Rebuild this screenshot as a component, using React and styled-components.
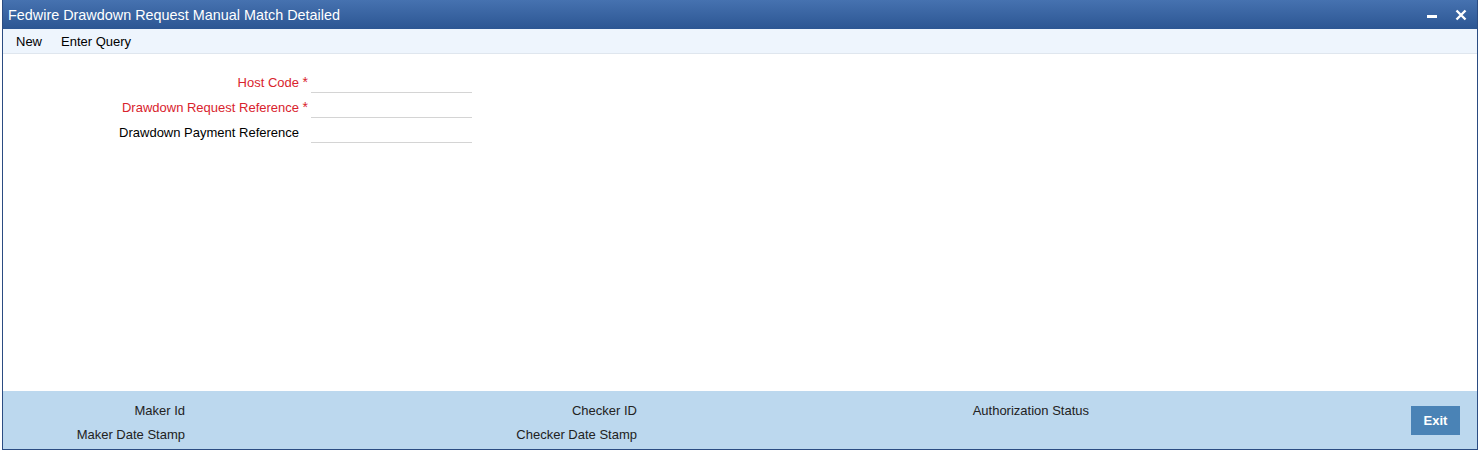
import React from "react";
import styled, { createGlobalStyle } from "styled-components";

const Global = createGlobalStyle`
  html, body { margin: 0; padding: 0; background: #fff; }
  body { font-family: "Liberation Sans", Arial, sans-serif; font-size: 13px; color: #000; }
`;

const Page = styled.div`
  padding: 0 2px 3px 2px;
  height: 453px;
  box-sizing: border-box;
`;

const Window = styled.div`
  height: 100%;
  box-sizing: border-box;
  border: 1px solid #2b4c82;
  border-top: none;
  display: flex;
  flex-direction: column;
  background: #fff;
`;

const TitleBar = styled.div`
  height: 29px;
  flex: none;
  display: flex;
  align-items: center;
  justify-content: space-between;
  padding: 0 10px 0 5px;
  background: linear-gradient(#4672b0, #2c5693);
  color: #fff;
`;

const Title = styled.div`
  font-size: 14.4px;
`;

const Controls = styled.div`
  display: flex;
  align-items: center;
  gap: 17px;
`;

const Toolbar = styled.div`
  height: 24px;
  flex: none;
  display: flex;
  align-items: center;
  gap: 19px;
  padding: 0 0 0 13px;
  background: #eef5fd;
  border-bottom: 1px solid #dfe6ee;
`;

const ToolItem = styled.span`
  font-size: 13px;
  color: #000;
`;

const Form = styled.div`
  flex: 1;
  padding-top: 16px;
  display: flex;
  flex-direction: column;
`;

const Row = styled.div`
  display: flex;
  align-items: flex-start;
  height: 25px;
`;

const Label = styled.div`
  width: 308px;
  box-sizing: border-box;
  padding-right: 3px;
  text-align: right;
  color: ${(p) => (p.$required ? "#d9232d" : "#000")};
  line-height: 25px;
  white-space: nowrap;
`;

const Star = styled.span`
  display: inline-block;
  width: 9px;
  text-align: right;
  font-size: 14px;
  color: #d9232d;
`;

const Input = styled.div`
  width: 161px;
  height: 22px;
  border-bottom: 1px solid #d4d4d4;
`;

const Footer = styled.div`
  height: 58px;
  flex: none;
  background: #bcd8ee;
  display: flex;
  align-items: flex-start;
  padding-top: 11px;
  box-sizing: border-box;
  position: relative;
`;

const FooterCol = styled.div`
  width: 452px;
  display: flex;
  flex-direction: column;
  gap: 6px;
`;

const FooterLabel = styled.div`
  width: 182px;
  text-align: right;
  line-height: 18px;
  color: #222;
`;

const ExitButton = styled.button`
  position: absolute;
  right: 17px;
  top: 15px;
  width: 49px;
  height: 29px;
  border: none;
  background: #4a83b6;
  color: #fff;
  font-family: "Liberation Sans", Arial, sans-serif;
  font-weight: bold;
  font-size: 13px;
  padding: 0;
`;

const Minimize = () => (
  <svg width="11" height="12" viewBox="0 0 11 12">
    <rect x="0" y="6" width="10" height="3" fill="#fff" />
  </svg>
);

const Close = () => (
  <svg width="12" height="12" viewBox="0 0 12 12">
    <path d="M1.5 1.5 L10.5 10.5 M10.5 1.5 L1.5 10.5" stroke="#fff" strokeWidth="2.4" />
  </svg>
);

export default function App() {
  return (
    <Page>
      <Global />
      <Window>
        <TitleBar>
          <Title>Fedwire Drawdown Request Manual Match Detailed</Title>
          <Controls>
            <Minimize />
            <Close />
          </Controls>
        </TitleBar>
        <Toolbar>
          <ToolItem>New</ToolItem>
          <ToolItem>Enter Query</ToolItem>
        </Toolbar>
        <Form>
          <Row>
            <Label $required>
              Host Code<Star>*</Star>
            </Label>
            <Input />
          </Row>
          <Row>
            <Label $required>
              Drawdown Request Reference<Star>*</Star>
            </Label>
            <Input />
          </Row>
          <Row>
            <Label>
              Drawdown Payment Reference<Star />
            </Label>
            <Input />
          </Row>
        </Form>
        <Footer>
          <FooterCol>
            <FooterLabel>Maker Id</FooterLabel>
            <FooterLabel>Maker Date Stamp</FooterLabel>
          </FooterCol>
          <FooterCol>
            <FooterLabel>Checker ID</FooterLabel>
            <FooterLabel>Checker Date Stamp</FooterLabel>
          </FooterCol>
          <FooterCol>
            <FooterLabel>Authorization Status</FooterLabel>
          </FooterCol>
          <ExitButton>Exit</ExitButton>
        </Footer>
      </Window>
    </Page>
  );
}
